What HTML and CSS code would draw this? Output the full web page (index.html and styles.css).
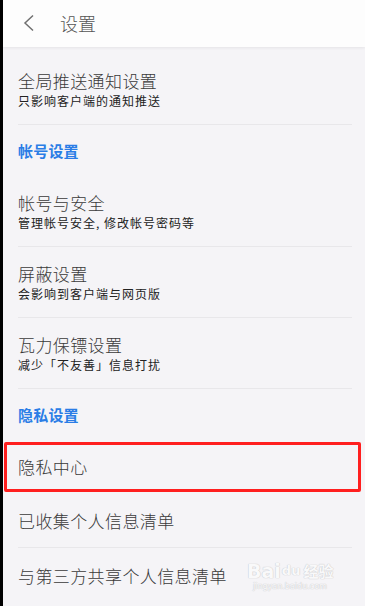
FILE: index.html
```html
<!DOCTYPE html>
<html lang="zh">
<head>
<meta charset="utf-8">
<link rel="stylesheet" href="styles.css">
</head>
<body>
<div class="app">
  <header class="topbar">
    <svg class="back" width="12" height="18" viewBox="0 0 12 18"><polyline points="10,1.5 2,9 10,16.5" fill="none" stroke="#707070" stroke-width="1.5"/></svg>
    <span class="title">设置</span>
  </header>
  <main class="list">
    <div class="item sub">
      <div class="t">全局推送通知设置</div>
      <div class="s">只影响客户端的通知推送</div>
    </div>
    <div class="section">帐号设置</div>
    <div class="item sub">
      <div class="t">帐号与安全</div>
      <div class="s">管理帐号安全, 修改帐号密码等</div>
    </div>
    <div class="item sub">
      <div class="t">屏蔽设置</div>
      <div class="s">会影响到客户端与网页版</div>
    </div>
    <div class="item sub">
      <div class="t">瓦力保镖设置</div>
      <div class="s">减少「不友善」信息打扰</div>
    </div>
    <div class="section">隐私设置</div>
    <div class="item single marked">
      <div class="t">隐私中心</div>
    </div>
    <div class="item single">
      <div class="t">已收集个人信息清单</div>
    </div>
    <div class="item single last">
      <div class="t">与第三方共享个人信息清单</div>
    </div>
  </main>
  <div class="watermark">
    <div class="wm-top"><span>Bai</span><span class="paw">du</span><span>经验</span></div>
    <div class="wm-url">jingyan.baidu.com</div>
  </div>
</div>
</body>
</html>
```

FILE: styles.css
```css
html, body {
  margin: 0;
  padding: 0;
  background: #000;
  height: 100%;
}
body {
  font-family: "Noto Sans CJK SC", "Noto Sans", sans-serif;
  overflow: hidden;
}
.app {
  margin-left: 3px;
  height: 606px;
  background: #f5f4f7;
  position: relative;
  overflow: hidden;
}
.topbar {
  height: 47px;
  background: #fdfdfd;
  display: flex;
  align-items: center;
  box-shadow: 0 1px 3px rgba(0,0,0,0.07);
  position: relative;
  z-index: 1;
}
.back {
  margin-left: 20px;
  margin-top: -2px;
}
.title {
  margin-left: 25px;
  font-size: 18px;
  font-weight: 300;
  color: #555;
  margin-top: -2px;
}
.list {
  padding: 7px 13px 0 15px;
}
.item {
  border-bottom: 1px solid #e8e7ea;
  box-sizing: border-box;
  position: relative;
}
.item.sub {
  height: 71px;
  padding-top: 16px;
}
.item.single {
  height: 54px;
  display: flex;
  align-items: center;
}
.item.marked {
  border-bottom-color: transparent;
}
.item.last {
  border-bottom: none;
}
.t {
  font-size: 17px;
  line-height: 21px;
  font-weight: 300;
  color: #3a3a3a;
  letter-spacing: 0.4px;
}
.s {
  font-size: 12px;
  line-height: 17px;
  color: #222;
  letter-spacing: 1px;
  margin-top: 1px;
}
.section {
  height: 51px;
  display: flex;
  align-items: center;
  font-size: 15px;
  font-weight: bold;
  color: #2a7de6;
  letter-spacing: 0.2px;
}
.marked::after {
  content: "";
  position: absolute;
  left: -14px;
  right: -9px;
  top: 2px;
  bottom: 1px;
  border: 3px solid #ff1f1f;
  border-radius: 2px;
}
.watermark {
  position: absolute;
  left: 244px;
  top: 560px;
  color: #f9f9fa;
  font-family: "DejaVu Sans", sans-serif;
  text-shadow: 0 0 1px #c9c9cc, 0 0 1px #c9c9cc;
}
.wm-top {
  display: flex;
  align-items: flex-end;
  font-size: 19px;
  font-weight: bold;
  line-height: 22px;
}
.wm-top span:last-child {
  font-size: 15px;
  margin-left: 3px;
  font-family: "Noto Sans CJK SC", sans-serif;
}
.paw {
  font-size: 13px;
  margin-left: 1px;
}
.wm-url {
  font-size: 8px;
  line-height: 10px;
  margin-left: 6px;
}
```
